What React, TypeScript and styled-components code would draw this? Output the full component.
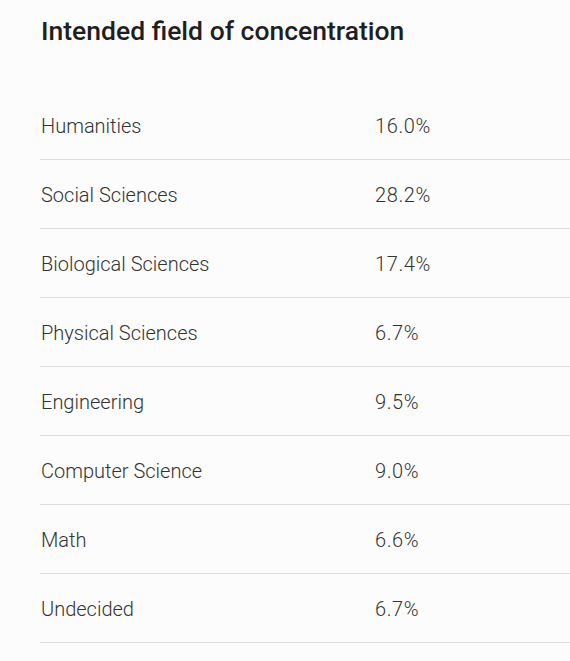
import React from "react";
import styled, { createGlobalStyle } from "styled-components";

const Global = createGlobalStyle`
  html, body { margin: 0; padding: 0; background: #fcfcfc; }
  body { font-family: Roboto, "Liberation Sans", sans-serif; }
`;

const Page = styled.div`
  padding: 15px 0 0 40px;
  width: 530px;
  box-sizing: content-box;
  overflow: hidden;
`;

const Title = styled.h2`
  margin: 0 0 45px 1px;
  font-size: 26.5px;
  font-weight: 500;
  color: #1f1f1f;
  line-height: 31px;
`;

const Table = styled.div`
  display: flex;
  flex-direction: column;
`;

const Row = styled.div`
  display: grid;
  grid-template-columns: 335px 1fr;
  height: 69px;
  padding-top: 2px;
  align-items: center;
  border-bottom: 1px solid #dcdfdf;
  box-sizing: border-box;
  font-size: 20px;
  font-weight: 300;
  color: #333;
`;

const Label = styled.span`
  padding-left: 1px;
`;

const Value = styled.span`
  letter-spacing: 0.6px;
`;

const data: [string, string][] = [
  ["Humanities", "16.0%"],
  ["Social Sciences", "28.2%"],
  ["Biological Sciences", "17.4%"],
  ["Physical Sciences", "6.7%"],
  ["Engineering", "9.5%"],
  ["Computer Science", "9.0%"],
  ["Math", "6.6%"],
  ["Undecided", "6.7%"],
];

export default function App() {
  return (
    <>
      <Global />
      <Page>
        <Title>Intended field of concentration</Title>
        <Table>
          {data.map(([k, v]) => (
            <Row key={k}>
              <Label>{k}</Label>
              <Value>{v}</Value>
            </Row>
          ))}
        </Table>
      </Page>
    </>
  );
}
